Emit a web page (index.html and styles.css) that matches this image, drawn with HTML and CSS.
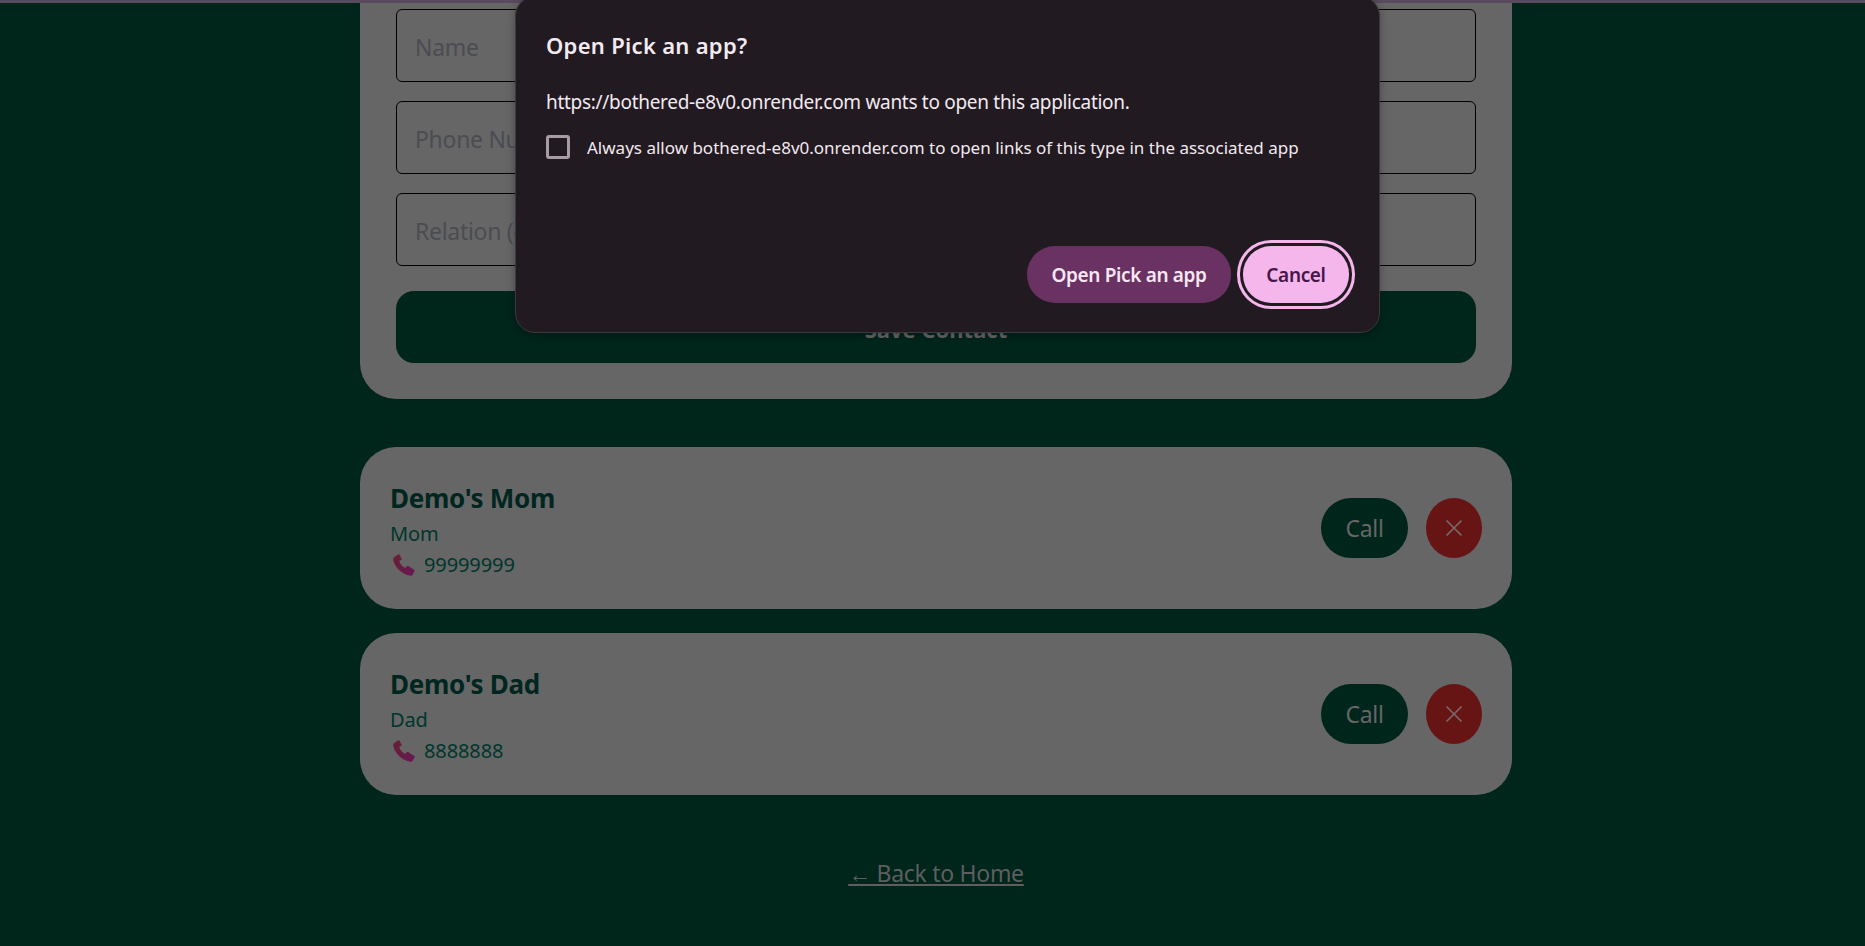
FILE: index.html
```html
<!DOCTYPE html>
<html lang="en">
<head>
  <meta charset="UTF-8">
  <meta name="viewport" content="width=device-width, initial-scale=1.0">
  <title>Emergency Contacts</title>
  <link rel="stylesheet" href="styles.css">
</head>
<body>
  <div class="top-strip"></div>

  <main class="page">
    <form class="contact-form">
      <input class="field" type="text" placeholder="Name">
      <input class="field" type="text" placeholder="Phone Number">
      <input class="field" type="text" placeholder="Relation (e.g. Mom)">
      <button class="save-button" type="button">Save Contact</button>
    </form>

    <div class="contact-list">
      <div class="contact-card">
        <div class="contact-info">
          <div class="contact-name">Demo's Mom</div>
          <div class="contact-relation">Mom</div>
          <div class="contact-phone">
            <svg class="phone-icon" viewBox="0 0 22 22">
              <defs>
                <linearGradient id="phoneA" x1="0" y1="0" x2="1" y2="1">
                  <stop offset="0" stop-color="#66202f"/>
                  <stop offset="1" stop-color="#681758"/>
                </linearGradient>
              </defs>
              <path fill="url(#phoneA)" d="M1 3.200 5 .4c.6-.4 1.200-.2 1.500.4l2 3.800c.3.5.1 1.100-.4 1.400L6.200 7c.7 2.600 3.200 5.600 6 7l1.500-1.700c.4-.4 1-.5 1.500-.2l5.900 3.600c.6.4.8 1 .4 1.600l-1.700 3.300c-.4.8-1.200 1.300-2.200 1.200C8.200 20.600.6 11.900.2 4.800c0-.6.3-1.200.8-1.600z"/>
            </svg>
            <span>99999999</span>
          </div>
        </div>
        <div class="contact-actions">
          <button class="call-button" type="button">Call</button>
          <button class="delete-button" type="button" aria-label="Delete">
            <svg viewBox="0 0 20 20"><path d="M2.500 2.500 17.500 17.500M17.500 2.500 2.500 17.500"/></svg>
          </button>
        </div>
      </div>

      <div class="contact-card">
        <div class="contact-info">
          <div class="contact-name">Demo's Dad</div>
          <div class="contact-relation">Dad</div>
          <div class="contact-phone">
            <svg class="phone-icon" viewBox="0 0 22 22">
              <defs>
                <linearGradient id="phoneB" x1="0" y1="0" x2="1" y2="1">
                  <stop offset="0" stop-color="#66202f"/>
                  <stop offset="1" stop-color="#681758"/>
                </linearGradient>
              </defs>
              <path fill="url(#phoneB)" d="M1 3.200 5 .4c.6-.4 1.200-.2 1.500.4l2 3.800c.3.5.1 1.100-.4 1.400L6.200 7c.7 2.600 3.200 5.600 6 7l1.500-1.700c.4-.4 1-.5 1.500-.2l5.900 3.600c.6.4.8 1 .4 1.600l-1.700 3.300c-.4.8-1.200 1.300-2.200 1.200C8.200 20.600.6 11.900.2 4.800c0-.6.3-1.200.8-1.600z"/>
            </svg>
            <span>8888888</span>
          </div>
        </div>
        <div class="contact-actions">
          <button class="call-button" type="button">Call</button>
          <button class="delete-button" type="button" aria-label="Delete">
            <svg viewBox="0 0 20 20"><path d="M2.500 2.500 17.500 17.500M17.500 2.500 2.500 17.500"/></svg>
          </button>
        </div>
      </div>
    </div>

    <a class="back-link" href="#">← Back to Home</a>
  </main>

  <div class="dialog">
    <h2 class="dialog-title">Open Pick an app?</h2>
    <p class="dialog-text">https://bothered-e8v0.onrender.com wants to open this application.</p>
    <label class="dialog-check">
      <span class="check-box"></span>
      <span>Always allow bothered-e8v0.onrender.com to open links of this type in the associated app</span>
    </label>
    <div class="dialog-buttons">
      <button class="open-button" type="button">Open Pick an app</button>
      <button class="cancel-button" type="button">Cancel</button>
    </div>
  </div>
</body>
</html>
```

FILE: styles.css
```css
body {
  font-family: 'Noto Sans', 'Open Sans', sans-serif;
  margin: 0;
  background-color: #00251b;
  height: 946px;
  overflow: hidden;
}

.top-strip {
  height: 3px;
  background-color: #5a4a60;
}

.page {
  width: 1152px;
  margin-left: 360px;
  display: flex;
  flex-direction: column;
}

.contact-form {
  background-color: #666;
  padding: 6px 36px 36px;
  border-radius: 0 0 36px 36px;
  display: flex;
  flex-direction: column;
  gap: 19px;
}

.field {
  height: 73px;
  box-sizing: border-box;
  padding: 2px 18px 0;
  background: transparent;
  border: 1.5px solid #000;
  border-radius: 6px;
  font-family: inherit;
  font-size: 23px;
  letter-spacing: -0.3px;
}

.field::placeholder {
  color: #4b4c52;
}

.save-button {
  height: 72px;
  margin-top: 6px;
  padding-top: 5px;
  background-color: #00251b;
  color: #666;
  border: none;
  border-radius: 18px;
  font-family: inherit;
  font-size: 22px;
  font-weight: 700;
}

.contact-list {
  margin-top: 48px;
  display: flex;
  flex-direction: column;
  gap: 24px;
}

.contact-card {
  height: 162px;
  box-sizing: border-box;
  padding: 0 30px;
  background-color: #666;
  border-radius: 36px;
  display: flex;
  align-items: center;
  justify-content: space-between;
}

.contact-info {
  padding-top: 3px;
}

.contact-name {
  color: #00261f;
  font-size: 26px;
  font-weight: 700;
  line-height: 36px;
  letter-spacing: -0.3px;
}

.contact-relation {
  margin-top: 4px;
  color: #00362c;
  font-size: 20px;
  line-height: 28px;
  letter-spacing: -0.1px;
}

.contact-phone {
  margin-top: 2px;
  color: #00362c;
  font-size: 20px;
  line-height: 30px;
  letter-spacing: -0.1px;
  display: flex;
  align-items: center;
  gap: 9px;
}

.phone-icon {
  width: 22px;
  height: 22px;
  margin-left: 3px;
}

.contact-actions {
  display: flex;
  gap: 18px;
}

.call-button {
  width: 87px;
  height: 60px;
  background-color: #00251b;
  color: #666;
  border: none;
  border-radius: 30px;
  font-family: inherit;
  font-size: 23px;
  letter-spacing: -0.3px;
}

.delete-button {
  width: 56px;
  height: 60px;
  padding: 0;
  background-color: #661414;
  border: none;
  border-radius: 28px / 30px;
  display: flex;
  align-items: center;
  justify-content: center;
}

.delete-button svg {
  width: 20px;
  height: 20px;
}

.delete-button path {
  fill: none;
  stroke: #7a6a6a;
  stroke-width: 1.6;
}

.back-link {
  margin-top: 62px;
  align-self: center;
  color: #5e5e5e;
  font-size: 23px;
  letter-spacing: -0.3px;
}

.dialog {
  position: absolute;
  top: -4px;
  left: 515px;
  width: 865px;
  height: 337px;
  box-sizing: border-box;
  padding: 31px 30px 0;
  background-color: #211a20;
  border: 1px solid #3b393b;
  border-radius: 20px;
  box-shadow: 0 2px 8px rgba(0, 0, 0, 0.3);
  color: #f3e9f0;
  display: flex;
  flex-direction: column;
}

.dialog-title {
  margin: 0;
  font-size: 22px;
  font-weight: 600;
  line-height: 34px;
  letter-spacing: 0.3px;
}

.dialog-text {
  margin: 26px 0 0;
  font-size: 19px;
  line-height: 28px;
  letter-spacing: -0.3px;
}

.dialog-check {
  margin-top: 19px;
  display: flex;
  align-items: center;
  gap: 17px;
  font-size: 17px;
}

.check-box {
  width: 24px;
  height: 24px;
  box-sizing: border-box;
  border: 3px solid #a89ca4;
  border-radius: 3px;
}

.dialog-buttons {
  position: absolute;
  right: 30px;
  top: 249px;
  display: flex;
  gap: 12px;
}

.open-button,
.cancel-button {
  height: 57px;
  border: none;
  border-radius: 28px;
  font-family: inherit;
  font-size: 19px;
  font-weight: 600;
  letter-spacing: -0.35px;
}

.open-button {
  width: 204px;
  background-color: #6a3263;
  color: #f8e6f3;
}

.cancel-button {
  width: 106px;
  background-color: #f5b6ec;
  color: #46164a;
  box-shadow: 0 0 0 3px #211a20, 0 0 0 6px #f5b6ec;
}
```
